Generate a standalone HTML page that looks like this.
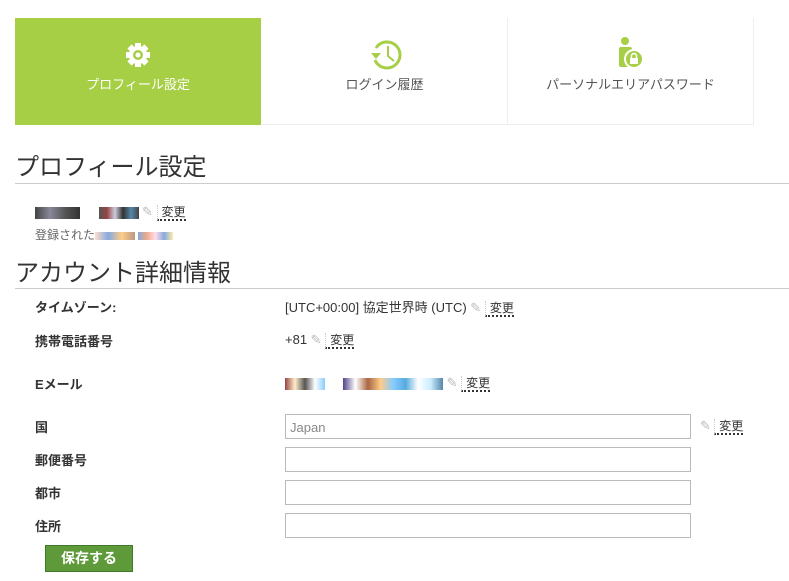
<html><head><style>
body{margin:0;width:789px;height:581px;background:#fff;font-family:"Liberation Sans","Noto Sans CJK JP",sans-serif;color:#333;position:relative;overflow:hidden}
.a{position:absolute}
.tab{position:absolute;top:18px;height:107px;width:246px;text-align:center;font-size:13px;color:#555;border-right:1px solid #eee;border-bottom:1px solid #eee;box-sizing:border-box}
.tab span{position:absolute;left:0;right:0;top:56px}
h1{position:absolute;margin:0;font-weight:normal;font-size:24px;color:#333;left:15px}
.hr{position:absolute;left:15px;right:0;height:1px;background:#ccc}
.lbl{position:absolute;left:35px;font-size:13px;font-weight:bold;color:#333}
.val{position:absolute;left:285px;font-size:13px;color:#333}
.inp{position:absolute;left:285px;width:406px;height:25px;border:1px solid #bbb;box-sizing:border-box;font-size:13px;color:#888;padding:5px 4px}
.ch{font-size:12px;color:#333;border-bottom:2px dotted #333;padding-left:4px;border-left:1px dotted #ccc}
.pen{color:#bbb;font-size:13px}
.px{display:inline-block;height:12px;vertical-align:middle}
</style></head><body>
<div class="tab" style="left:15px;background:#a6cf45;color:#fff;border:none">
<svg class="a" style="left:108px;top:22px" width="30" height="30" viewBox="0 0 30 30"><g fill="#fff"><circle cx="15" cy="15" r="9"/><rect x="12" y="3" width="6" height="24"/><rect x="3" y="12" width="24" height="6"/><rect x="12" y="3" width="6" height="24" transform="rotate(45 15 15)"/><rect x="12" y="3" width="6" height="24" transform="rotate(-45 15 15)"/></g><circle cx="15" cy="15" r="5" fill="#a6cf45"/><circle cx="15" cy="15" r="2.5" fill="#fff"/></svg>
<span>プロフィール設定</span></div>
<div class="tab" style="left:262px">
<svg class="a" style="left:107px;top:20px" width="34" height="34" viewBox="0 0 34 34"><path d="M7 10A13 13 0 1 1 6 22" fill="none" stroke="#a6cf45" stroke-width="3"/><path d="M2 15l5 6 5-6z" fill="#a6cf45"/><path d="M19 8v10l6 5" fill="none" stroke="#a6cf45" stroke-width="2"/></svg>
<span>ログイン履歴</span></div>
<div class="tab" style="left:508px">
<svg class="a" style="left:108px;top:18px" width="30" height="34" viewBox="0 0 30 34"><circle cx="9" cy="5" r="4" fill="#a6cf45"/><rect x="3" y="11" width="13" height="20" rx="2" fill="#a6cf45"/><circle cx="18" cy="23" r="9" fill="#a6cf45" stroke="#fff" stroke-width="2"/><rect x="14" y="22" width="8" height="6" fill="#fff"/><path d="M15.5 22v-2a2.5 2.5 0 0 1 5 0v2" fill="none" stroke="#fff" stroke-width="1.5"/></svg>
<span>パーソナルエリアパスワード</span></div>
<h1 style="top:147px">プロフィール設定</h1>
<div class="hr" style="top:183px"></div>
<div class="a" style="left:35px;top:203px;font-size:12px">
<span class="px" style="width:45px;background:linear-gradient(90deg,#444,#889,#555,#333)"></span>
<span class="px" style="width:12px"></span>
<span class="px" style="width:40px;background:linear-gradient(90deg,#555,#944,#ccd,#333,#58a,#444)"></span>
<span class="pen"> ✎ </span><span class="ch">変更</span></div>
<div class="a" style="left:35px;top:226px;font-size:12px;color:#666">登録された<span class="px" style="width:40px;background:linear-gradient(90deg,#fdc,#8ad,#fc8,#b98);height:8px"></span> <span class="px" style="width:35px;background:linear-gradient(90deg,#8ad,#ea8,#fde,#8ad,#fea);height:8px"></span></div>
<h1 style="top:253px">アカウント詳細情報</h1>
<div class="hr" style="top:288px"></div>
<div class="lbl" style="top:297px">タイムゾーン:</div>
<div class="val" style="top:297px">[UTC+00:00] 協定世界時 (UTC) <span class="pen">✎</span> <span class="ch">変更</span></div>
<div class="lbl" style="top:331px">携帯電話番号</div>
<div class="val" style="top:331px">+81 <span class="pen">✎</span> <span class="ch">変更</span></div>
<div class="lbl" style="top:374px">Eメール</div>
<div class="val" style="top:374px"><span class="px" style="width:40px;background:linear-gradient(90deg,#944,#fec,#555,#fff,#8cf)"></span><span class="px" style="width:18px"></span><span class="px" style="width:100px;background:linear-gradient(90deg,#548,#fff,#a64,#fc8,#8cf,#5ad,#fff,#cef,#58a)"></span> <span class="pen">✎</span> <span class="ch">変更</span></div>
<div class="lbl" style="top:417px">国</div>
<div class="inp" style="top:414px">Japan</div>
<div class="a" style="left:700px;top:417px;font-size:12px"><span class="pen">✎</span> <span class="ch">変更</span></div>
<div class="lbl" style="top:450px">郵便番号</div><div class="inp" style="top:447px"></div>
<div class="lbl" style="top:483px">都市</div><div class="inp" style="top:480px"></div>
<div class="lbl" style="top:516px">住所</div><div class="inp" style="top:513px"></div>
<div class="a" style="left:45px;top:545px;width:88px;height:27px;background:#5f9a3a;border:1px solid #3f7a2a;box-sizing:border-box;color:#fff;font-weight:bold;font-size:14px;text-align:center;line-height:25px">保存する</div>
</body></html>
